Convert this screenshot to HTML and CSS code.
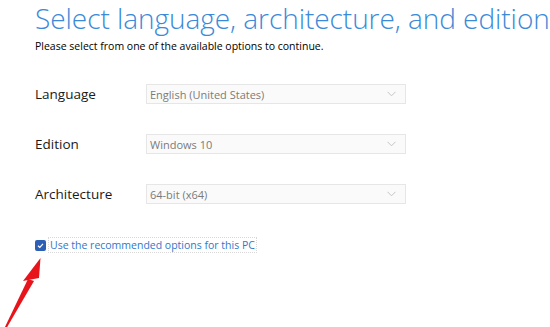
FILE: index.html
```html
<!DOCTYPE html>
<html>
<head>
<meta charset="utf-8">
<link rel="stylesheet" href="styles.css">
</head>
<body>
<div class="page">
  <h1 class="title">Select language, architecture, and edition</h1>
  <p class="subtitle">Please select from one of the available options to continue.</p>
  <div class="rows">
    <div class="row">
      <span class="label">Language</span>
      <div class="select"><span>English (United States)</span><svg class="chev" width="9" height="6" viewBox="0 0 9 6"><path d="M0.5 0.8 L4.5 4.8 L8.5 0.8" fill="none" stroke="#c4c4c4" stroke-width="1"/></svg></div>
    </div>
    <div class="row">
      <span class="label">Edition</span>
      <div class="select"><span>Windows 10</span><svg class="chev" width="9" height="6" viewBox="0 0 9 6"><path d="M0.5 0.8 L4.5 4.8 L8.5 0.8" fill="none" stroke="#c4c4c4" stroke-width="1"/></svg></div>
    </div>
    <div class="row">
      <span class="label">Architecture</span>
      <div class="select"><span>64-bit (x64)</span><svg class="chev" width="9" height="6" viewBox="0 0 9 6"><path d="M0.5 0.8 L4.5 4.8 L8.5 0.8" fill="none" stroke="#c4c4c4" stroke-width="1"/></svg></div>
    </div>
  </div>
  <div class="check-row">
    <span class="box"><svg width="11" height="11" viewBox="0 0 11 11"><path d="M3 5.7 L4.8 7.4 L8 3.8" fill="none" stroke="#fff" stroke-width="1.2"/></svg></span>
    <span class="check-label">Use the recommended options for this PC</span>
  </div>
</div>
<svg class="arrow" width="60" height="80" viewBox="0 0 60 80">
  <path d="M4 79 L28 29 L34 31 L6 79 Z" fill="#e8141b"/>
  <path d="M40.5 8 L23 31 L39 28 Z" fill="#e8141b"/>
</svg>
</body>
</html>
```
FILE: styles.css
```css
html, body {
  margin: 0;
  padding: 0;
  background: #fff;
  width: 550px;
  height: 327px;
  overflow: hidden;
}
.page {
  padding: 0 0 0 35px;
  font-family: "Open Sans", "Noto Sans", sans-serif;
}
.title {
  margin: 0;
  padding-top: 1px;
  font-weight: 300;
  font-size: 28px;
  line-height: 34px;
  color: #3b8ad9;
  white-space: nowrap;
  letter-spacing: -0.05px;
}
.subtitle {
  margin: 4px 0 0 0;
  font-size: 10.5px;
  line-height: 14px;
  color: #000;
}
.rows {
  margin-top: 31px;
  display: flex;
  flex-direction: column;
  gap: 30px;
}
.row {
  display: flex;
  align-items: center;
  height: 20px;
}
.label {
  width: 111px;
  font-size: 13.5px;
  color: #1a1a1a;
}
.select {
  width: 246px;
  height: 18px;
  border: 1px solid #e6e6e6;
  background: #fafafa;
  display: flex;
  align-items: center;
  justify-content: space-between;
  padding: 0 9px 0 3px;
  box-sizing: content-box;
  font-size: 11px;
  color: #7a7a7a;
}
.chev { display: block; }
.check-row {
  margin-top: 34px;
  display: flex;
  align-items: center;
  gap: 3px;
}
.box {
  width: 11px;
  height: 11px;
  border-radius: 2px;
  background: #2d5fb5;
  display: flex;
}
.check-label {
  font-size: 10.5px;
  line-height: 14px;
  color: #2f78cc;
  outline: 1px dotted #d8d8d8;
  padding: 0 1px;
}
.arrow {
  position: absolute;
  left: 0;
  top: 250px;
}
```
